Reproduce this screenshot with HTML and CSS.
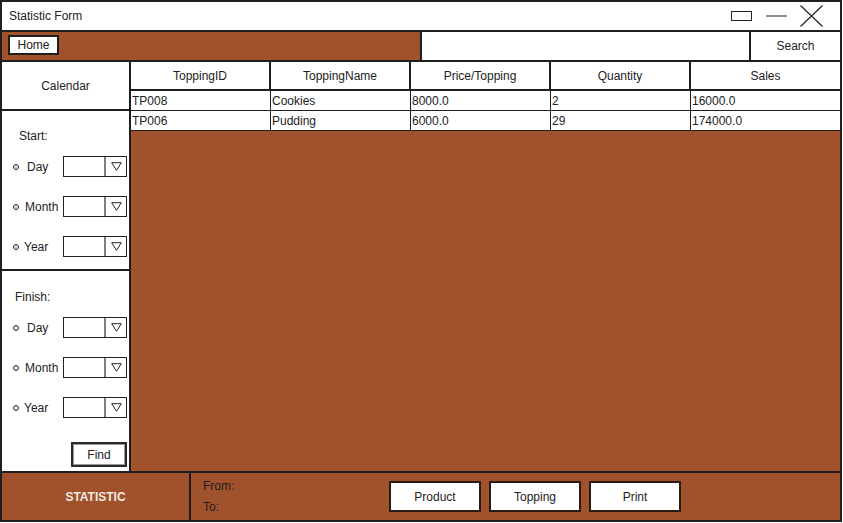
FILE: index.html
```html
<!DOCTYPE html>
<html>
<head>
<meta charset="utf-8">
<title>Statistic Form</title>
<link rel="stylesheet" href="styles.css">
</head>
<body>
<div class="window">
  <div class="titlebar">
    <span class="title">Statistic Form</span>
    <div class="winctl">
      <svg class="ic-max" width="21" height="10" viewBox="0 0 21 10"><rect x="0.5" y="0.5" width="20" height="9" fill="none" stroke="#222" stroke-width="1"/></svg>
      <svg class="ic-min" width="21" height="2" viewBox="0 0 21 2"><line x1="0" y1="1" x2="21" y2="1" stroke="#222" stroke-width="1"/></svg>
      <svg class="ic-close" width="23" height="22" viewBox="0 0 23 22"><line x1="0.5" y1="0.5" x2="22.5" y2="21.5" stroke="#222" stroke-width="1.2"/><line x1="22.5" y1="0.5" x2="0.5" y2="21.5" stroke="#222" stroke-width="1.2"/></svg>
    </div>
  </div>

  <div class="toolbar">
    <div class="nav"><div class="home-btn">Home</div></div>
    <div class="search-input"></div>
    <div class="search-btn">Search</div>
  </div>

  <div class="main">
    <aside class="sidebar">
      <div class="calendar">Calendar</div>

      <section class="range range-start">
        <div class="range-title">Start:</div>
        <div class="field">
          <span class="radio"></span><span class="label label-day">Day</span>
          <div class="select"><span class="select-value"></span><span class="select-arrow"><svg width="11" height="9" viewBox="0 0 11 9"><polygon points="0.7,0.7 10.3,0.7 5.5,8.3" fill="none" stroke="#222" stroke-width="1"/></svg></span></div>
        </div>
        <div class="field">
          <span class="radio"></span><span class="label label-month">Month</span>
          <div class="select"><span class="select-value"></span><span class="select-arrow"><svg width="11" height="9" viewBox="0 0 11 9"><polygon points="0.7,0.7 10.3,0.7 5.5,8.3" fill="none" stroke="#222" stroke-width="1"/></svg></span></div>
        </div>
        <div class="field">
          <span class="radio"></span><span class="label label-year">Year</span>
          <div class="select"><span class="select-value"></span><span class="select-arrow"><svg width="11" height="9" viewBox="0 0 11 9"><polygon points="0.7,0.7 10.3,0.7 5.5,8.3" fill="none" stroke="#222" stroke-width="1"/></svg></span></div>
        </div>
      </section>

      <section class="range range-finish">
        <div class="range-title">Finish:</div>
        <div class="field">
          <span class="radio"></span><span class="label label-day">Day</span>
          <div class="select"><span class="select-value"></span><span class="select-arrow"><svg width="11" height="9" viewBox="0 0 11 9"><polygon points="0.7,0.7 10.3,0.7 5.5,8.3" fill="none" stroke="#222" stroke-width="1"/></svg></span></div>
        </div>
        <div class="field">
          <span class="radio"></span><span class="label label-month">Month</span>
          <div class="select"><span class="select-value"></span><span class="select-arrow"><svg width="11" height="9" viewBox="0 0 11 9"><polygon points="0.7,0.7 10.3,0.7 5.5,8.3" fill="none" stroke="#222" stroke-width="1"/></svg></span></div>
        </div>
        <div class="field">
          <span class="radio"></span><span class="label label-year">Year</span>
          <div class="select"><span class="select-value"></span><span class="select-arrow"><svg width="11" height="9" viewBox="0 0 11 9"><polygon points="0.7,0.7 10.3,0.7 5.5,8.3" fill="none" stroke="#222" stroke-width="1"/></svg></span></div>
        </div>
        <div class="find-btn">Find</div>
      </section>
    </aside>

    <div class="content">
      <div class="table">
        <div class="th">ToppingID</div>
        <div class="th">ToppingName</div>
        <div class="th">Price/Topping</div>
        <div class="th">Quantity</div>
        <div class="th th-last">Sales</div>

        <div class="td">TP008</div>
        <div class="td">Cookies</div>
        <div class="td">8000.0</div>
        <div class="td">2</div>
        <div class="td td-last">16000.0</div>

        <div class="td">TP006</div>
        <div class="td">Pudding</div>
        <div class="td">6000.0</div>
        <div class="td">29</div>
        <div class="td td-last">174000.0</div>
      </div>
    </div>
  </div>

  <div class="footer">
    <div class="stat">STATISTIC</div>
    <div class="footer-main">
      <div class="from-to">
        <div class="ft-line">From:</div>
        <div class="ft-line">To:</div>
      </div>
      <div class="buttons">
        <div class="btn">Product</div>
        <div class="btn">Topping</div>
        <div class="btn">Print</div>
      </div>
    </div>
  </div>
</div>
</body>
</html>
```

FILE: styles.css
```css
html, body {
  margin: 0;
  padding: 0;
  background: #ffffff;
}

.window {
  width: 842px;
  height: 522px;
  box-sizing: border-box;
  border: 2px solid #1e1e1e;
  display: flex;
  flex-direction: column;
  font-family: "Liberation Sans", Arial, sans-serif;
  font-size: 12px;
  color: #222;
  background: #fff;
}

/* Title bar */
.titlebar {
  height: 30px;
  box-sizing: border-box;
  border-bottom: 2px solid #1e1e1e;
  display: flex;
  align-items: center;
  padding-left: 7px;
  padding-right: 17px;
  flex-shrink: 0;
}

.winctl {
  margin-left: auto;
  display: flex;
  align-items: center;
}

.winctl svg {
  display: block;
}

.ic-max { margin-right: 14px; }
.ic-min { margin-right: 13px; }

/* Toolbar */
.toolbar {
  height: 30px;
  box-sizing: border-box;
  border-bottom: 2px solid #1e1e1e;
  display: flex;
  flex-shrink: 0;
}

.nav {
  width: 418px;
  background: #a0522d;
  display: flex;
  align-items: flex-start;
  padding: 3px 0 0 6px;
  box-sizing: border-box;
}

.home-btn {
  width: 51px;
  height: 20px;
  box-sizing: border-box;
  border: 2px solid #1e1e1e;
  background: #fff;
  display: flex;
  align-items: center;
  justify-content: center;
}

.search-input {
  width: 331px;
  box-sizing: border-box;
  border-left: 2px solid #1e1e1e;
  border-right: 2px solid #1e1e1e;
  background: #fff;
}

.search-btn {
  flex: 1;
  display: flex;
  align-items: center;
  justify-content: center;
}

/* Main */
.main {
  flex: 1;
  display: flex;
  min-height: 0;
}

.sidebar {
  width: 129px;
  box-sizing: border-box;
  border-right: 2px solid #1e1e1e;
  display: flex;
  flex-direction: column;
  background: #fff;
}

.calendar {
  height: 49px;
  box-sizing: border-box;
  border-bottom: 2px solid #1e1e1e;
  display: flex;
  align-items: center;
  justify-content: center;
}

.range {
  display: flex;
  flex-direction: column;
  box-sizing: border-box;
}

.range-start {
  height: 160px;
  border-bottom: 2px solid #1e1e1e;
  padding-top: 18px;
}

.range-finish {
  flex: 1;
  padding-top: 19px;
}

.range-title {
  height: 14px;
  line-height: 14px;
}

.range-start .range-title { padding-left: 17px; }
.range-finish .range-title { padding-left: 13px; }

.field {
  height: 21px;
  display: flex;
  align-items: center;
  padding-left: 11px;
  margin-top: 19px;
}

.range-title + .field {
  margin-top: 13px;
}

.radio {
  width: 4px;
  height: 4px;
  border: 1px solid #3a3a3a;
  border-radius: 50%;
  background: #dccfe4;
  flex-shrink: 0;
}

.label-day { margin-left: 8px; }
.label-month { margin-left: 6px; }
.label-year { margin-left: 5px; }

.select {
  margin-left: auto;
  margin-right: 2px;
  width: 64px;
  height: 21px;
  box-sizing: border-box;
  border: 1px solid #222;
  display: flex;
  background: #fff;
}

.select-value {
  flex: 1;
}

.select-arrow {
  width: 22px;
  box-sizing: border-box;
  border-left: 2px solid #808080;
  display: flex;
  align-items: center;
  justify-content: center;
}

.select-arrow svg {
  display: block;
}

.find-btn {
  align-self: flex-end;
  margin-right: 2px;
  margin-top: 24px;
  width: 56px;
  height: 25px;
  box-sizing: border-box;
  border: 2px solid #2a2a2a;
  box-shadow: inset 0 0 0 1px #9a9a9a;
  display: flex;
  align-items: center;
  justify-content: center;
  background: #fff;
}

/* Table */
.content {
  flex: 1;
  background: #a0522d;
}

.table {
  display: grid;
  grid-template-columns: 140px 140px 140px 140px 1fr;
  grid-template-rows: 29px 20px 20px;
  background: #fff;
}

.th {
  box-sizing: border-box;
  border-right: 2px solid #1e1e1e;
  border-bottom: 2px solid #1e1e1e;
  display: flex;
  align-items: center;
  justify-content: center;
}

.td {
  box-sizing: border-box;
  border-right: 1px solid #1e1e1e;
  border-bottom: 1px solid #1e1e1e;
  display: flex;
  align-items: center;
  padding-left: 1px;
}

.th-last, .td-last {
  border-right: none;
}

/* Footer */
.footer {
  height: 49px;
  box-sizing: border-box;
  border-top: 2px solid #1e1e1e;
  display: flex;
  flex-shrink: 0;
  background: #a0522d;
}

.stat {
  width: 189px;
  box-sizing: border-box;
  border-right: 2px solid #1e1e1e;
  display: flex;
  align-items: center;
  justify-content: center;
  color: #f4e8e0;
  font-weight: bold;
}

.footer-main {
  flex: 1;
  display: flex;
  align-items: center;
}

.from-to {
  width: 198px;
  box-sizing: border-box;
  padding-left: 12px;
  display: flex;
  flex-direction: column;
  color: #1e1e1e;
}

.ft-line {
  height: 21px;
  line-height: 21px;
}

.buttons {
  display: flex;
  gap: 8px;
}

.btn {
  width: 92px;
  height: 31px;
  box-sizing: border-box;
  border: 2px solid #2a1c14;
  background: #fff;
  display: flex;
  align-items: center;
  justify-content: center;
}
```
